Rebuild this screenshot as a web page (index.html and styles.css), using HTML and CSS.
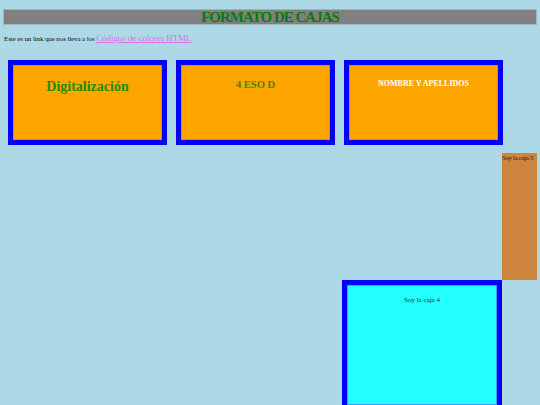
FILE: index.html
```html
<!DOCTYPE html>
<html lang="es">
<head>
<meta charset="utf-8">
<title>Formato de cajas</title>
<link rel="stylesheet" href="styles.css">
</head>
<body>
<h1 class="title">FORMATO DE CAJAS</h1>
<p class="intro">Este es un link que nos lleva a los <a class="link" href="#">Códigos de colores HTML</a></p>
<div class="row">
  <div class="box box1"><h2 class="t1">Digitalización</h2></div>
  <div class="box box2"><h3 class="t2">4 ESO D</h3></div>
  <div class="box box3"><h4 class="t3">NOMBRE Y APELLIDOS</h4></div>
</div>
<div class="lower">
  <div class="box5">Soy la caja 5</div>
  <div class="box4">Soy la caja 4</div>
</div>
</body>
</html>
```
FILE: styles.css
```css
html, body {
  margin: 0;
  padding: 0;
  background: #add8e6;
  font-family: "Liberation Serif", "Times New Roman", serif;
  overflow: hidden;
  height: 405px;
}
.title {
  margin: 9px 3px 0 3px;
  height: 14px;
  line-height: 15px;
  background: #808080;
  border: 1px solid #9fb3ba;
  color: #0a7a0a;
  font-size: 15px;
  letter-spacing: -1px;
  font-weight: bold;
  text-align: center;
}
.intro {
  margin: 8px 0 0 4px;
  font-size: 7.1px;
  letter-spacing: -0.15px;
  line-height: 11px;
  color: #111;
}
.link {
  color: #e070e8;
  font-size: 9.1px;
  letter-spacing: -0.1px;
  text-decoration: underline;
}
.row {
  display: flex;
  gap: 9px;
  margin: 15px 0 0 8px;
}
.box {
  box-sizing: border-box;
  width: 159px;
  height: 85px;
  background: #ffa500;
  border: 5px solid #0000ff;
  box-shadow: inset 0 0 0 1px #b88a6a;
  text-align: center;
}
.box h2, .box h3, .box h4 {
  margin: 0;
  font-weight: bold;
}
.t1 {
  padding-top: 14px;
  font-size: 14px;
  line-height: 16px;
  color: #2a8a00;
}
.t2 {
  padding-top: 14px;
  font-size: 10.5px;
  line-height: 12px;
  color: #3a8a00;
}
.t3 {
  padding-top: 14px;
  font-size: 8px;
  line-height: 9px;
  color: #ffffff;
}
.lower {
  margin-top: 8px;
}
.box5 {
  float: right;
  box-sizing: border-box;
  width: 35px;
  height: 127px;
  margin-right: 3px;
  background: #cd853f;
  color: #2a1a0a;
  font-size: 6.8px;
  letter-spacing: -0.3px;
  line-height: 10px;
  white-space: nowrap;
  padding-top: 0;
}
.box4 {
  clear: right;
  box-sizing: border-box;
  width: 160px;
  height: 130px;
  margin-left: 342px;
  background: #22ffff;
  border: 5px solid #0000ff;
  box-shadow: inset 0 0 0 1px #3aa0ff;
  text-align: center;
  font-size: 7px;
  line-height: 9px;
  color: #103838;
  padding-top: 11px;
}
```
